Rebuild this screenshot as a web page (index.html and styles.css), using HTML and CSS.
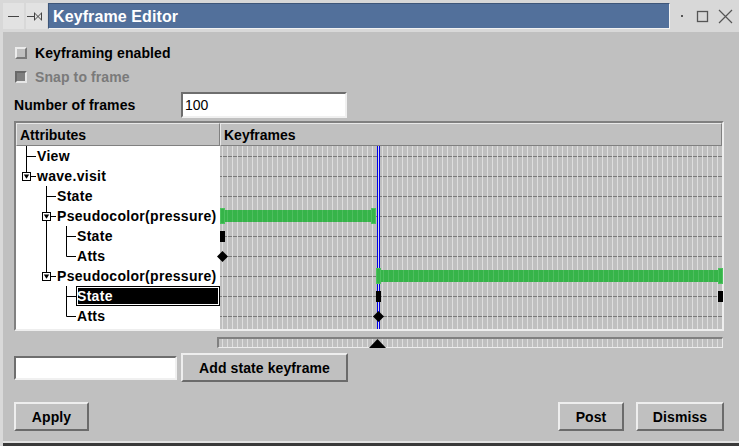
FILE: index.html
```html
<!DOCTYPE html>
<html>
<head>
<meta charset="utf-8">
<link rel="stylesheet" href="styles.css">
</head>
<body>
<svg class="defs" xmlns="http://www.w3.org/2000/svg">
  <symbol id="g-tee" viewBox="0 0 20 20"><path d="M10.5 0V20M10.5 10.5H20" stroke="#000" fill="none"/></symbol>
  <symbol id="g-elbow" viewBox="0 0 20 20"><path d="M10.5 0V10.5H20" stroke="#000" fill="none"/></symbol>
  <symbol id="g-vert" viewBox="0 0 20 20"><path d="M10.5 0V20" stroke="#000" fill="none"/></symbol>
  <symbol id="g-teebox" viewBox="0 0 20 20"><path d="M10.5 0V20M10.5 10.5H20" stroke="#000" fill="none"/><rect x="6.5" y="6.5" width="8" height="8" fill="#fff" stroke="#000"/><polygon points="7.8,8.5 13.2,8.5 10.5,12.8" fill="#000"/></symbol>
  <symbol id="g-elbowbox" viewBox="0 0 20 20"><path d="M10.5 0V10.5H20" stroke="#000" fill="none"/><rect x="6.5" y="6.5" width="8" height="8" fill="#fff" stroke="#000"/><polygon points="7.8,8.5 13.2,8.5 10.5,12.8" fill="#000"/></symbol>
</svg>
<div class="window">
  <div class="titlebar">
    <div class="tb-btn"><svg width="21" height="26" viewBox="0 0 21 26"><path d="M5 13.5H16" stroke="#444" stroke-width="1"/></svg></div>
    <div class="tb-btn"><svg width="21" height="26" viewBox="0 0 21 26"><path d="M1 13.5H8M8.5 9.5V17.5M15.5 9.5V17.5M8.5 10L15.5 17M8.5 17L15.5 10" stroke="#444" stroke-width="1" fill="none"/></svg></div>
    <div class="tb-title">Keyframe Editor</div>
    <div class="tb-right"><svg width="69" height="26" viewBox="0 0 69 26"><rect x="11" y="12" width="2" height="2" fill="#555"/><rect x="27.5" y="8.5" width="10" height="10" fill="none" stroke="#555" stroke-width="1.3"/><path d="M49 7L62 20M62 7L49 20" stroke="#555" stroke-width="1.2"/></svg></div>
  </div>
  <div class="client">
    <div class="check-row"><span class="check"></span><span>Keyframing enabled</span></div>
    <div class="check-row disabled"><span class="check on"></span><span>Snap to frame</span></div>
    <div class="field-row"><span class="field-label">Number of frames</span><div class="input frames">100</div></div>
    <div class="table">
      <div class="thead">
        <div class="th">Attributes</div>
        <div class="th">Keyframes</div>
      </div>
      <div class="tbody">
        <div class="tree">
          <div class="row"><svg class="g"><use href="#g-tee"/></svg><span class="lbl">View</span></div>
          <div class="row"><svg class="g"><use href="#g-elbowbox"/></svg><span class="lbl">wave.visit</span></div>
          <div class="row"><span class="g"></span><svg class="g"><use href="#g-tee"/></svg><span class="lbl">State</span></div>
          <div class="row"><span class="g"></span><svg class="g"><use href="#g-teebox"/></svg><span class="lbl">Pseudocolor(pressure)</span></div>
          <div class="row"><span class="g"></span><svg class="g"><use href="#g-vert"/></svg><svg class="g"><use href="#g-tee"/></svg><span class="lbl">State</span></div>
          <div class="row"><span class="g"></span><svg class="g"><use href="#g-vert"/></svg><svg class="g"><use href="#g-elbow"/></svg><span class="lbl">Atts</span></div>
          <div class="row"><span class="g"></span><svg class="g"><use href="#g-elbowbox"/></svg><span class="lbl">Pseudocolor(pressure)</span></div>
          <div class="row"><span class="g"></span><span class="g"></span><svg class="g"><use href="#g-tee"/></svg><span class="lbl selected">State</span></div>
          <div class="row"><span class="g"></span><span class="g"></span><svg class="g"><use href="#g-elbow"/></svg><span class="lbl">Atts</span></div>
        </div>
        <div class="canvas">
          <div class="cursor" style="left:157px"></div>
          <div class="bar" style="left:0px;width:156px;top:62px"><i class="cap"></i><i class="cap"></i></div>
          <div class="bar" style="left:156px;width:347px;top:122px"><i class="cap"></i><i class="cap"></i></div>
          <div class="key" style="left:0px;top:85px"></div>
          <div class="key" style="left:156px;top:145px"></div>
          <div class="key" style="left:498px;top:145px"></div>
          <div class="dia" style="left:-3px;top:105px"></div>
          <div class="dia" style="left:153px;top:165px"></div>
        </div>
      </div>
    </div>
    <div class="slider"><span class="thumb" style="left:150px"></span></div>
    <div class="state-row"><div class="input state"></div><button class="btn add">Add state keyframe</button></div>
    <div class="actions">
      <button class="btn apply">Apply</button>
      <button class="btn post">Post</button>
      <button class="btn dismiss">Dismiss</button>
    </div>
  </div>
</div>
</body>
</html>
```
FILE: styles.css
```css
* { box-sizing: border-box; }
html, body { margin: 0; padding: 0; }
body {
  width: 739px;
  height: 446px;
  overflow: hidden;
  background: #c0c0c0;
  font-family: "Liberation Sans", Arial, sans-serif;
  font-size: 14px;
  font-weight: bold;
  color: #000;
}
.defs { display: none; }
.window {
  width: 739px;
  height: 446px;
  display: flex;
  flex-direction: column;
}
.titlebar {
  height: 32px;
  flex: none;
  display: flex;
  align-items: flex-start;
  padding: 3px 0 0 3px;
  background: #d8d8d8;
}
.tb-btn {
  width: 21px;
  height: 26px;
  flex: none;
  background: #e2e2e2;
}
.tb-btn + .tb-btn { margin-left: 2px; }
.tb-btn svg, .tb-right svg { display: block; }
.tb-title {
  margin-left: 1px;
  width: 622px;
  height: 26px;
  flex: none;
  background: #52709b;
  border: 1px solid;
  border-color: #3e5679 #f2f2f2 #f2f2f2 #3e5679;
  color: #fff;
  font-size: 16px;
  letter-spacing: 0.1px;
  display: flex;
  align-items: center;
  padding: 1px 0 0 4px;
  white-space: nowrap;
}
.tb-right { flex: none; }

.client {
  flex: 1;
  background: #c0c0c0;
  padding: 9px 15px 0 14px;
  box-shadow: inset 3px 0 0 #d9d9d9, inset 0 -3px 0 #3a3a3a, inset 0 -5px 0 #e2e2e2;
}
.check-row {
  height: 24px;
  display: flex;
  align-items: center;
  white-space: nowrap;
  letter-spacing: 0.1px;
}
.check {
  width: 12px;
  height: 12px;
  flex: none;
  margin-left: 1px;
  margin-right: 8px;
  border: 2px solid;
  border-color: #ececec #7a7a7a #7a7a7a #ececec;
  background: #c0c0c0;
}
.check.on {
  background: #7f7f7f;
  border-color: #686868 #e6e6e6 #e6e6e6 #686868;
}
.disabled { color: #7a7a7a; }

.field-row {
  margin-top: 3px;
  height: 26px;
  display: flex;
  align-items: center;
}
.field-label { width: 167px; flex: none; white-space: nowrap; letter-spacing: 0.1px; }
.input {
  background: #fff;
  border: 2px solid;
  border-color: #6e6e6e #f0f0f0 #f0f0f0 #6e6e6e;
  padding-left: 2px;
  display: flex;
  align-items: center;
  font-weight: normal;
  flex: none;
}
.input.frames { width: 166px; height: 26px; }
.input.state { width: 163px; height: 24px; }

.table {
  margin-top: 3px;
  width: 710px;
  height: 210px;
  border: 2px solid;
  border-color: #808080 #eeeeee #eeeeee #808080;
  display: flex;
  flex-direction: column;
}
.thead {
  height: 23px;
  flex: none;
  display: grid;
  grid-template-columns: 204px 1fr;
}
.th {
  border: 1px solid;
  border-color: #e8e8e8 #808080 #808080 #e8e8e8;
  padding-left: 3px;
  display: flex;
  align-items: center;
  background: #c0c0c0;
}
.tbody {
  flex: 1;
  display: grid;
  grid-template-columns: 204px 1fr;
}
.tree {
  background: #fff;
  display: flex;
  flex-direction: column;
}
.row {
  height: 20px;
  display: flex;
  flex: none;
}
.g {
  width: 20px;
  height: 20px;
  flex: none;
  display: block;
}
.lbl {
  flex: 1;
  line-height: 20px;
  padding-left: 1px;
  white-space: nowrap;
  letter-spacing: 0.3px;
}
.lbl.selected {
  background: #000;
  color: #fff;
  outline: 1px solid #fff;
  outline-offset: -2px;
}
.canvas {
  position: relative;
  background-color: #c0c0c0;
  background-image:
    repeating-linear-gradient(to right, transparent 0 2px, #dedede 2px 3px, transparent 3px 5px),
    repeating-linear-gradient(to bottom, transparent 0 10px, #7a7a7a 10px 11px, transparent 11px 20px);
}
.cursor {
  position: absolute;
  top: 0;
  bottom: 0;
  width: 3px;
  border-left: 1px solid #0000e6;
  border-right: 1px solid #0000e6;
  background: #dcdcdc;
}
.bar {
  position: absolute;
  height: 16px;
  display: flex;
  justify-content: space-between;
  background:
    repeating-linear-gradient(to right, transparent 0 2px, rgba(255,255,255,0.12) 2px 3px, transparent 3px 5px) 0 2px / 100% 12px no-repeat,
    linear-gradient(#36b449, #36b449) 0 2px / 100% 12px no-repeat;
}
.cap {
  width: 5px;
  height: 16px;
  background: #36b449;
  box-shadow: inset 0 0 0 1px #4cc25e;
}
.key {
  position: absolute;
  width: 5px;
  height: 11px;
  background: #000;
}
.dia {
  position: absolute;
  width: 11px;
  height: 11px;
  background: #000;
  clip-path: polygon(50% 0, 100% 50%, 50% 100%, 0 50%);
}
.slider {
  position: relative;
  margin: 6px 0 0 203px;
  width: 506px;
  height: 11px;
  border-style: solid;
  border-width: 2px 1px 1px 2px;
  border-color: #808080 #ececec #ececec #808080;
  background-color: #c0c0c0;
  background-image: repeating-linear-gradient(to right, transparent 0 3px, #dedede 3px 4px, transparent 4px 5px);
}
.thumb {
  position: absolute;
  top: 0;
  width: 17px;
  height: 9px;
  background: #000;
  clip-path: polygon(50% 0, 100% 100%, 0 100%);
}
.state-row {
  margin-top: 5px;
  height: 29px;
  display: flex;
  align-items: center;
  gap: 4px;
}
.btn {
  font: inherit;
  color: #000;
  background: #c0c0c0;
  border: 2px solid;
  border-color: #eeeeee #6b6b6b #6b6b6b #eeeeee;
  height: 29px;
  padding: 0;
  flex: none;
  white-space: nowrap;
  letter-spacing: 0.1px;
}
.btn.add { width: 167px; }
.actions {
  margin-top: 20px;
  height: 29px;
  display: flex;
}
.btn.apply { width: 75px; }
.btn.post { width: 66px; margin-left: auto; }
.btn.dismiss { width: 88px; margin-left: 12px; }
```
